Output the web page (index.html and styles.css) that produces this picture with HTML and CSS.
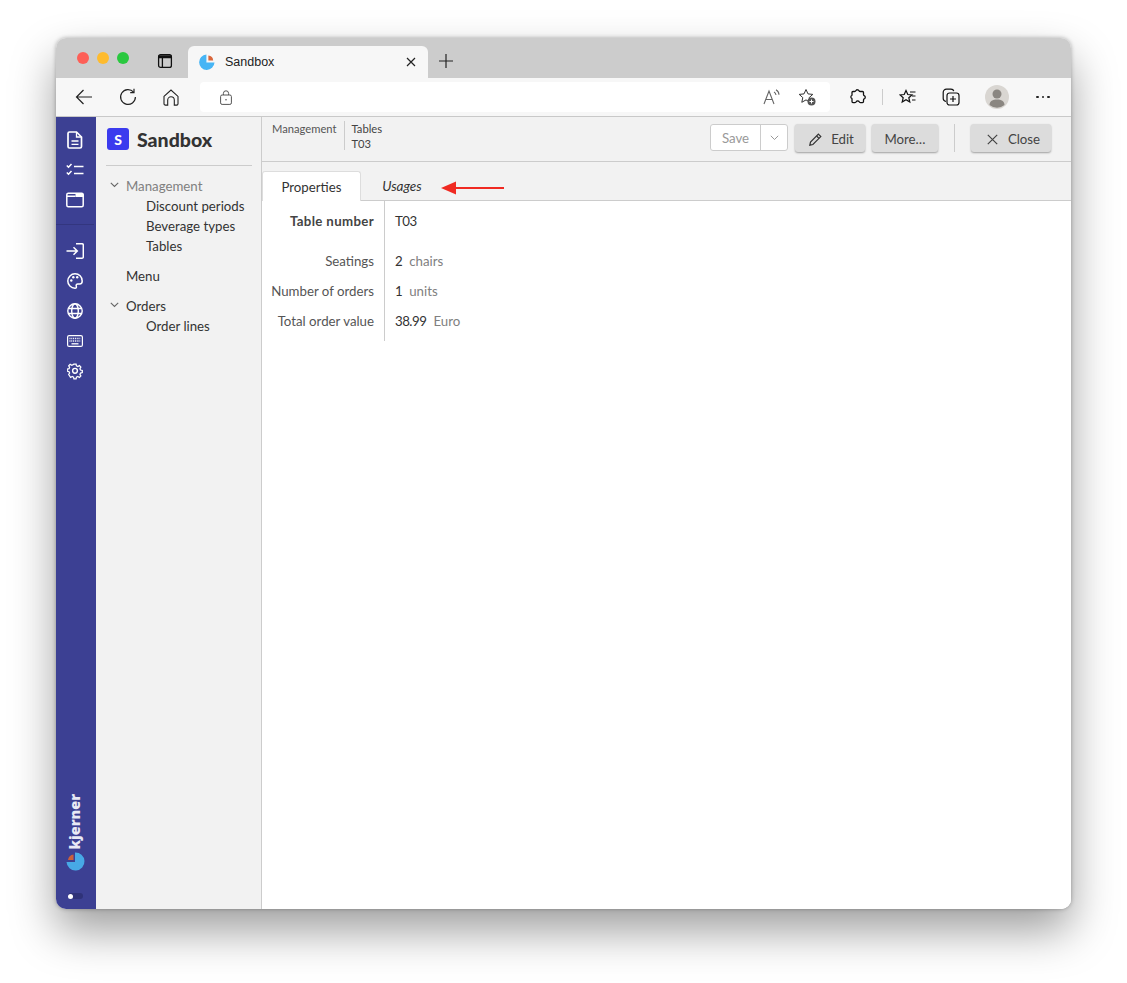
FILE: index.html
```html
<!DOCTYPE html>
<html lang="en">
<head>
    <meta charset="UTF-8">
    <title>Sandbox</title>
    <link rel="stylesheet" href="styles.css">
</head>
<body>
<div class="window">
    <!-- browser chrome -->
    <div class="titlebar">
        <div class="lights">
            <span class="light red"></span>
            <span class="light yellow"></span>
            <span class="light green"></span>
        </div>
        <svg class="tabview" width="16" height="16" viewBox="0 0 16 16" fill="none" stroke="#111" stroke-width="1.300">
            <rect x="1.600" y="1.600" width="12.800" height="12.800" rx="2"/>
            <path d="M1.600 3.800h12.800" stroke-width="3"/>
            <path d="M5.400 5v9.400"/>
        </svg>
        <div class="browsertab">
            <svg width="16" height="16" viewBox="0 0 16 16">
                <path d="M7.400 0.500A7.700 7.700 0 1 0 15.500 8.600H7.400Z" fill="#47b5f5"/>
                <path d="M9.400 1.600V6.600H14.200A5.400 5.400 0 0 0 9.400 1.600Z" fill="#d9673c"/>
            </svg>
            <span class="browsertab-title">Sandbox</span>
            <svg width="10" height="10" viewBox="0 0 10 10" stroke="#222" stroke-width="1.200"><path d="M1 1l8 8M9 1l-8 8"/></svg>
        </div>
        <svg class="newtab" width="14" height="14" viewBox="0 0 14 14" stroke="#222" stroke-width="1.200"><path d="M7 0v14M0 7h14"/></svg>
    </div>

    <div class="toolbar">
        <div class="navbtns">
            <svg width="18" height="16" viewBox="0 0 18 16" fill="none" stroke="#222" stroke-width="1.200"><path d="M17 8H1.500M8.500 1L1.500 8l7 7"/></svg>
            <svg width="18" height="18" viewBox="0 0 18 18" fill="none" stroke="#222" stroke-width="1.200"><path d="M14.600 4.200A7.400 7.400 0 1 0 16.400 9"/><path d="M15 0.800v3.800h-3.800"/></svg>
            <svg width="16" height="17" viewBox="0 0 16 17" fill="none" stroke="#222" stroke-width="1.100"><path d="M1 7.400L8 1l7 6.400v7.400a1.300 1.300 0 0 1-1.300 1.300h-2.400v-5a3.300 3.300 0 0 0-6.600 0v5H2.300A1.300 1.300 0 0 1 1 14.800z"/></svg>
        </div>
        <div class="addressbar">
            <svg width="12" height="15" viewBox="0 0 12 15" fill="none" stroke="#555" stroke-width="1"><rect x="0.600" y="5" width="10.800" height="9.400" rx="1.500"/><path d="M3.400 5V3.400a2.600 2.600 0 0 1 5.200 0V5"/><circle cx="6" cy="9.700" r="0.800" fill="#555" stroke="none"/></svg>
            <div class="addressbar-right">
                <svg width="17" height="16" viewBox="0 0 17 16" fill="none" stroke="#666" stroke-width="1.100"><path d="M1 15L6 2l5 13M2.800 10.500h6.400"/><path d="M11 3a4 4 0 0 1 2 3M13 0.800a6 6 0 0 1 3 5"/></svg>
                <svg width="18" height="18" viewBox="0 0 18 18" fill="none"><path d="M8 1.500l2 4.400 4.800.5-3.600 3.200 1 4.700L8 11.900l-4.200 2.400 1-4.700L1.200 6.400 6 5.900z" stroke="#333" stroke-width="1"/><circle cx="13.500" cy="13.500" r="4" fill="#555"/><path d="M13.500 11.500v4M11.500 13.500h4" stroke="#fff"/></svg>
            </div>
        </div>
        <div class="tools">
            <svg class="tool-puzzle" width="16" height="16" viewBox="0 0 16 16" fill="none" stroke="#111" stroke-width="1.300"><path d="M6 1.500c.6-1 2.500-1 3 .2.200.6 1 .8 1.600.8h1.900a1 1 0 0 1 1 1v1.900c0 .7.400 1.200 1 1.400 1 .5 1 2.300 0 2.800-.6.200-1 .7-1 1.400v1.600a1 1 0 0 1-1 1h-2c-.7 0-1.200-.4-1.400-1-.5-1-2.300-1-2.800 0-.2.600-.7 1-1.400 1H3a1 1 0 0 1-1-1v-1.800c0-.7.300-1.100-.3-1.500C.6 9.200.6 7 1.700 6.500c.6-.3.300-.9.300-1.500V3.500a1 1 0 0 1 1-1h1.500c.6 0 1.200-.4 1.500-1z"/></svg>
            <span class="tool-sep"></span>
            <svg class="tool-fav" width="18" height="16" viewBox="0 0 18 16" fill="none" stroke="#111" stroke-width="1.200"><path d="M7 1.500l1.800 4 4.200.4-3.200 2.800 1 4.300L7 10.800l-3.800 2.200 1-4.300L1 5.900l4.200-.4z"/><path d="M11 3h5.500M13 7h3.500M13 11h3.500"/></svg>
            <svg class="tool-coll" width="18" height="18" viewBox="0 0 18 18" fill="none" stroke="#111" stroke-width="1.200"><path d="M4 13.500C2 13 1.200 12 1.200 10.500V4.500C1.200 2.500 2.500 1.200 4.500 1.200h4.500c1.500 0 2.500.800 2.800 2"/><rect x="5" y="5" width="12" height="12" rx="2.500"/><path d="M11 8v6M8 11h6"/></svg>
            <svg class="tool-avatar" width="24" height="24" viewBox="0 0 24 24"><circle cx="12" cy="12" r="12" fill="#d9d6d2"/><circle cx="12" cy="9" r="4.500" fill="#8a8681"/><path d="M4.500 20c0-3.800 3.400-5.500 7.500-5.500s7.500 1.700 7.500 5.500a12 12 0 0 1-15 0z" fill="#8a8681"/></svg>
            <span class="tool-dots">
                <span></span><span></span><span></span>
            </span>
        </div>
    </div>

    <!-- application -->
    <div class="app">
        <div class="rail">
            <div class="rail-group rail-top">
                <svg width="16" height="18" viewBox="0 0 16 18" fill="none" stroke="#fff" stroke-width="1.700"><path d="M2.500 1h7l5 5v9.500a1.500 1.500 0 0 1-1.500 1.500H2.500A1.500 1.500 0 0 1 1 15.500v-13A1.500 1.500 0 0 1 2.500 1z"/><path d="M9.500 1v5h5M4.500 10h7M4.500 13.300h7" stroke-width="1.300"/></svg>
                <svg width="18" height="14" viewBox="0 0 18 14" fill="none" stroke="#fff" stroke-width="1.500"><path d="M0.800 2.500l1.700 1.700L5.500 1M0.800 9.500l1.700 1.700 3-3.200M8 3.500h9.500M8 10.500h9.500"/></svg>
                <svg width="18" height="15" viewBox="0 0 18 15" fill="none" stroke="#fff" stroke-width="1.500"><rect x="0.800" y="0.800" width="16.400" height="13.400" rx="1.500"/><path d="M9.500 1.500h8v3h-8z" fill="#fff" stroke="none"/><path d="M1 3.700h8.500"/></svg>
            </div>
            <div class="rail-group">
                <svg width="18" height="16" viewBox="0 0 18 16" fill="none" stroke="#fff" stroke-width="1.500"><path d="M0.500 8H11M7.500 4.300L11.300 8l-3.800 3.700"/><path d="M10 0.800h6a1.300 1.300 0 0 1 1.300 1.300v11.800a1.300 1.300 0 0 1-1.300 1.300h-6"/></svg>
                <svg width="16" height="16" viewBox="0 0 16 16" fill="none" stroke="#fff" stroke-width="1.500"><path d="M8 .8A7.200 7.200 0 0 0 8 15.200c1.300 0 1.700-.9 1.300-1.900-.5-1.200.2-2.300 1.500-2.300h1.900c1.500 0 2.500-1 2.500-3C15.200 3.800 12 .8 8 .8z"/><circle cx="4.300" cy="7.500" r="1.200" fill="#fff" stroke="none"/><circle cx="6.300" cy="4.300" r="1.200" fill="#fff" stroke="none"/><circle cx="10.200" cy="4.300" r="1.200" fill="#fff" stroke="none"/></svg>
                <svg width="16" height="16" viewBox="0 0 16 16" fill="none" stroke="#fff" stroke-width="1.400"><circle cx="8" cy="8" r="7.200"/><ellipse cx="8" cy="8" rx="3.300" ry="7.200"/><path d="M1.200 5.500h13.600M1.200 10.500h13.600"/></svg>
                <svg width="16" height="12" viewBox="0 0 16 12" fill="none" stroke="#fff" stroke-width="1.200"><rect x="0.600" y="0.600" width="14.800" height="10.800" rx="1.500"/><path d="M2.500 3.500h11M2.500 6h11" stroke-dasharray="1 .8" stroke-width="1.600"/><path d="M4.500 8.800h7" stroke-width="1.300"/></svg>
                <svg width="16" height="16" viewBox="0 0 16 16" fill="none" stroke="#fff" stroke-width="1.400"><path d="M6.800.8h2.400l.4 2 1.500.7 1.800-1 1.600 1.700-1 1.700.6 1.500 2 .5v2.300l-2 .5-.6 1.500 1 1.700-1.600 1.700-1.800-1-1.500.7-.4 2H6.800l-.4-2-1.500-.7-1.800 1L1 12.400l1-1.700-.6-1.500-2-.5V6.400l2-.5.600-1.500-1-1.700 1.600-1.700 1.800 1 1.500-.7z" transform="translate(.8 .4) scale(.9)"/><circle cx="8" cy="7.800" r="2.400"/></svg>
            </div>
            <div class="rail-brand">
                <span class="brand-text">kjerner</span>
                <svg width="19" height="19" viewBox="0 0 19 19">
                    <path d="M9 .500A9 9 0 1 1 .500 10H9z" fill="#47a9e6"/>
                    <path d="M7.500 2.500V8H2A6.500 6.500 0 0 1 7.500 2.500Z" fill="#c9603c"/>
                </svg>
            </div>
            <div class="rail-toggle"><span></span></div>
        </div>

        <div class="sidebar">
            <div class="side-head">
                <span class="side-logo">S</span>
                <span class="side-title">Sandbox</span>
            </div>
            <ul class="menu">
                <li class="menu-item menu-muted"><svg class="chev" width="9" height="6" viewBox="0 0 9 6" fill="none" stroke="#666" stroke-width="1.100"><path d="M.8 .8L4.500 4.500 8.200 .8"/></svg>Management</li>
                <li class="menu-item menu-child">Discount periods</li>
                <li class="menu-item menu-child">Beverage types</li>
                <li class="menu-item menu-child">Tables</li>
                <li class="menu-item menu-gap">Menu</li>
                <li class="menu-item menu-gap"><svg class="chev" width="9" height="6" viewBox="0 0 9 6" fill="none" stroke="#666" stroke-width="1.100"><path d="M.8 .8L4.500 4.500 8.200 .8"/></svg>Orders</li>
                <li class="menu-item menu-child">Order lines</li>
            </ul>
        </div>

        <div class="main">
            <div class="header">
                <div class="crumbs">
                    <div class="crumb">Management</div>
                    <div class="crumb crumb-last">Tables<br>T03</div>
                </div>
                <div class="actions">
                    <div class="btn-split">
                        <span class="split-save">Save</span>
                        <span class="split-more"><svg width="9" height="6" viewBox="0 0 9 6" fill="none" stroke="#999" stroke-width="1"><path d="M.8 .8L4.500 4.500 8.200 .8"/></svg></span>
                    </div>
                    <button class="btn btn-edit"><svg width="13" height="13" viewBox="0 0 13 13" fill="none" stroke="#333" stroke-width="1.200"><path d="M9.400 1.200l2.400 2.400-7.900 7.900-3.100.7.700-3.100z"/><path d="M7.600 3l2.400 2.400" /></svg>Edit</button>
                    <button class="btn btn-more">More…</button>
                    <span class="action-sep"></span>
                    <button class="btn btn-close"><svg width="11" height="11" viewBox="0 0 11 11" stroke="#444" stroke-width="1.200"><path d="M.8 .8l9.400 9.400M10.200 .8L.8 10.200"/></svg>Close</button>
                </div>
            </div>
            <div class="tabs">
                <div class="tab tab-active">Properties</div>
                <div class="tab tab-usages">Usages</div>
                <svg class="tab-arrow" width="63" height="14" viewBox="0 0 63 14"><path d="M15 6h48v2H15z" fill="#f02a22"/><path d="M0 7l15-6.500v13z" fill="#f02a22"/></svg>
            </div>
            <div class="content">
                <div class="form">
                    <div class="field field-first">
                        <div class="field-label label-bold">Table number</div>
                        <div class="field-value">T03</div>
                    </div>
                    <div class="field">
                        <div class="field-label">Seatings</div>
                        <div class="field-value">2<span class="unit">chairs</span></div>
                    </div>
                    <div class="field">
                        <div class="field-label">Number of orders</div>
                        <div class="field-value">1<span class="unit">units</span></div>
                    </div>
                    <div class="field">
                        <div class="field-label">Total order value</div>
                        <div class="field-value">38.99<span class="unit">Euro</span></div>
                    </div>
                </div>
            </div>
        </div>
    </div>
</div>
</body>
</html>
```

FILE: styles.css
```css
* {
  box-sizing: border-box;
}

html, body {
  margin: 0;
  height: 100%;
  background: #fff;
  overflow: hidden;
}

body {
  padding: 38px 56px 0;
  font-family: "Lato", "Liberation Sans", sans-serif;
  font-size: 13.250px;
  color: #333;
}

.window {
  width: 1015px;
  height: 871px;
  border-radius: 10px;
  overflow: hidden;
  display: flex;
  flex-direction: column;
  box-shadow: 0 22px 45px rgba(0, 0, 0, .38), 0 0 4px rgba(0, 0, 0, .3);
}

/* browser chrome */
.titlebar {
  height: 40px;
  background: #cccccc;
  display: flex;
  align-items: flex-end;
  flex-shrink: 0;
}

.lights {
  display: flex;
  gap: 8px;
  padding: 0 0 14px 21px;
}

.light {
  width: 12px;
  height: 12px;
  border-radius: 50%;
}

.red { background: #fd5f57; }
.yellow { background: #febb2e; }
.green { background: #2ac83f; }

.tabview {
  margin: 0 0 9px 28px;
}

.browsertab {
  width: 240px;
  height: 32px;
  margin-left: 15px;
  background: #f7f7f7;
  border-radius: 6px 6px 0 0;
  display: flex;
  align-items: center;
  padding: 0 12px 0 11px;
  font-family: "Liberation Sans", sans-serif;
  font-size: 12.500px;
  color: #222;
}

.browsertab-title {
  flex: 1;
  margin-left: 10px;
}

.newtab {
  margin: 0 0 10px 11px;
}

.toolbar {
  height: 39px;
  background: #f7f7f7;
  border-bottom: 1px solid #c9c9c9;
  display: flex;
  align-items: center;
  flex-shrink: 0;
}

.navbtns {
  width: 144px;
  display: flex;
  align-items: center;
  gap: 26px;
  padding-left: 19px;
}

.addressbar {
  width: 630px;
  height: 30px;
  background: #fff;
  border-radius: 4px;
  display: flex;
  align-items: center;
  justify-content: space-between;
  padding: 0 14px 0 20px;
}

.addressbar-right {
  display: flex;
  align-items: center;
  gap: 18px;
}

.tools {
  display: flex;
  align-items: center;
  padding-left: 20px;
}

.tool-sep {
  width: 1px;
  height: 16px;
  background: #ccc;
  margin: 0 16px;
}

.tool-coll {
  margin-left: 25px;
}

.tool-avatar {
  margin-left: 25px;
}

.tool-dots {
  display: flex;
  gap: 3px;
  margin-left: 27px;
}

.tool-dots span {
  width: 2.500px;
  height: 2.500px;
  background: #222;
  border-radius: 50%;
}

/* application */
.app {
  flex: 1;
  display: flex;
  min-height: 0;
}

.rail {
  width: 40px;
  background: #3c4093;
  display: flex;
  flex-direction: column;
  align-items: center;
  padding-right: 2px;
  flex-shrink: 0;
}

.rail-group {
  width: 100%;
  display: flex;
  flex-direction: column;
  align-items: center;
  gap: 12px;
}

.rail-group svg {
  height: 18px;
}

.rail-top {
  padding: 14px 0 15px;
  border-bottom: 1px solid #33367f;
  margin-bottom: 17px;
}

.rail-brand {
  margin-top: auto;
  display: flex;
  flex-direction: column;
  align-items: center;
  gap: 2px;
}

.brand-text {
  writing-mode: vertical-rl;
  transform: rotate(180deg);
  font-family: "Open Sans", sans-serif;
  font-weight: 800;
  font-size: 14.500px;
  line-height: 16px;
  color: #e8e9f5;
}

.rail-toggle {
  width: 15px;
  height: 6px;
  margin: 22px 0 10px;
  border-radius: 3px;
  background: #2f3278;
  display: flex;
  align-items: center;
}

.rail-toggle span {
  width: 5px;
  height: 5px;
  border-radius: 50%;
  background: #fff;
}

.sidebar {
  width: 166px;
  background: #f2f2f2;
  border-right: 1px solid #ccc;
  padding: 0 9px 0 10px;
  flex-shrink: 0;
}

.side-head {
  height: 49px;
  display: flex;
  align-items: center;
  gap: 8px;
  padding: 0 0 4px 1px;
  border-bottom: 1px solid #ccc;
}

.side-logo {
  width: 22px;
  height: 22px;
  border-radius: 3px;
  background: #3b3bee;
  color: #fff;
  font-weight: 900;
  font-size: 14px;
  display: flex;
  align-items: center;
  justify-content: center;
}

.side-title {
  font-weight: 900;
  font-size: 19.500px;
  color: #333;
}

.menu {
  list-style: none;
  margin: 0;
  padding: 10px 0 0;
}

.menu-item {
  position: relative;
  height: 20px;
  line-height: 20px;
  padding-left: 20px;
  white-space: nowrap;
}

.menu-muted {
  color: #808080;
}

.menu-child {
  padding-left: 40px;
}

.menu-gap {
  margin-top: 10px;
}

.chev {
  position: absolute;
  left: 4px;
  top: 6px;
}

.main {
  flex: 1;
  background: #fff;
  display: flex;
  flex-direction: column;
  min-width: 0;
}

.header {
  height: 45px;
  background: #f2f2f2;
  border-bottom: 1px solid #ccc;
  display: flex;
  justify-content: space-between;
  padding: 4px 20px 0 10px;
}

.crumbs {
  display: flex;
  font-size: 11.200px;
  line-height: 15px;
  color: #555;
}

.crumb {
  padding-right: 7px;
}

.crumb-last {
  border-left: 1px solid #ccc;
  padding-left: 7px;
  height: 29px;
  color: #444;
}

.actions {
  display: flex;
  align-items: flex-start;
  padding-top: 3px;
}

.btn-split {
  display: flex;
  height: 27px;
  border: 1px solid #ccc;
  border-radius: 3px;
  background: #fff;
  color: #999;
  margin-right: 7px;
}

.split-save {
  width: 50px;
  text-align: center;
  line-height: 26px;
  border-right: 1px solid #ccc;
}

.split-more {
  width: 26px;
  display: flex;
  align-items: center;
  justify-content: center;
}

.btn {
  height: 28px;
  border: none;
  border-radius: 3px;
  background: #dcdcdc;
  box-shadow: 0 1px 2px rgba(0, 0, 0, .35);
  font: inherit;
  color: #444;
  display: flex;
  align-items: center;
  justify-content: center;
  padding: 2px 0 0;
}

.btn-edit {
  width: 70px;
  gap: 9px;
  margin-right: 7px;
  padding-left: 3px;
}

.btn-more {
  width: 66px;
}

.btn-close {
  width: 80px;
  gap: 10px;
  padding-left: 5px;
}

.action-sep {
  width: 1px;
  height: 28px;
  margin: 0 16px;
  background: #ccc;
}

.tabs {
  height: 39px;
  background: #f2f2f2;
  border-bottom: 1px solid #ccc;
  display: flex;
  align-items: flex-end;
  position: relative;
  padding-left: 1px;
}

.tab {
  height: 30px;
  line-height: 30px;
  width: 99px;
  text-align: center;
  margin-bottom: -1px;
}

.tab-active {
  background: #fff;
  border: 1px solid #ddd;
  border-bottom: none;
  border-radius: 3px 3px 0 0;
  height: 30px;
  margin-left: -1px;
}

.tab-usages {
  font-style: italic;
  font-size: 13.500px;
  width: 82px;
}

.tab-arrow {
  position: absolute;
  left: 179px;
  top: 19px;
}

.content {
  flex: 1;
  background: #fff;
}

.form {
  width: 123px;
  height: 140px;
  padding-top: 5px;
  border-right: 1px solid #ccc;
}

.field {
  display: flex;
  height: 30px;
  line-height: 30px;
  white-space: nowrap;
}

.field-first {
  margin-bottom: 10px;
}

.field-label {
  flex: 0 0 112px;
  text-align: right;
  color: #555;
}

.label-bold {
  font-weight: 700;
  letter-spacing: .35px;
  color: #444;
}

.field-value {
  margin-left: 21px;
  letter-spacing: -.5px;
  color: #333;
}

.unit {
  margin-left: 7px;
  letter-spacing: 0;
  color: #808080;
}
```
